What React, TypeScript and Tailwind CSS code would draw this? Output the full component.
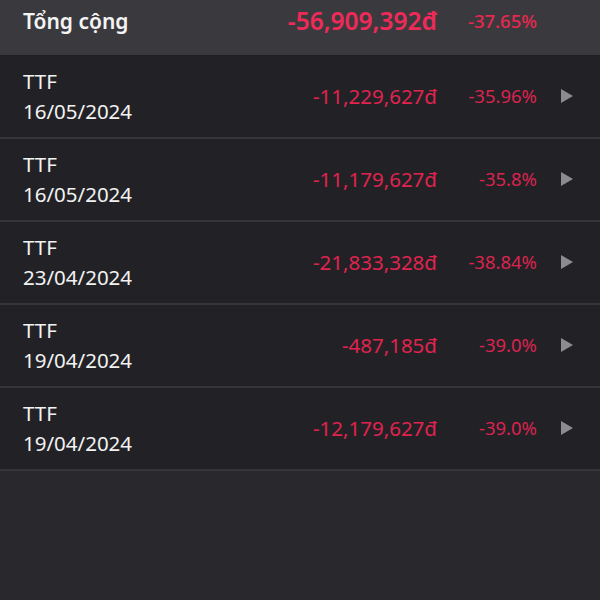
import React from "react";

const rows = [
  { code: "TTF", date: "16/05/2024", value: "-11,229,627đ", pct: "-35.96%" },
  { code: "TTF", date: "16/05/2024", value: "-11,179,627đ", pct: "-35.8%" },
  { code: "TTF", date: "23/04/2024", value: "-21,833,328đ", pct: "-38.84%" },
  { code: "TTF", date: "19/04/2024", value: "-487,185đ", pct: "-39.0%" },
  { code: "TTF", date: "19/04/2024", value: "-12,179,627đ", pct: "-39.0%" },
];

export default function App() {
  return (
    <div
      className="w-[600px] h-[600px] bg-[#28282d] flex flex-col overflow-hidden"
      style={{ fontFamily: '"Noto Sans", "Open Sans", sans-serif' }}
    >
      <div className="h-[56px] shrink-0 bg-[#3a3a3e] flex items-start pt-[6px] pl-[23px] pr-[27px] border-b border-[#1f1f22]">
        <div className="flex-1 text-[21px] leading-[30px] font-semibold text-[#f4f4f4]">Tổng cộng</div>
        <div className="flex items-center h-[30px]">
          <div className="text-[24.5px] font-semibold text-[#ef2a59]">-56,909,392đ</div>
          <div className="w-[73px] ml-[27px] text-right text-[18.5px] font-medium text-[#e8274f]">-37.65%</div>
          <div className="w-[12px] ml-[24px]" />
        </div>
      </div>
      {rows.map((r, i) => (
        <div
          key={i}
          className="flex items-center bg-[#222226] pl-[23px] pr-[27px] pt-[10px] pb-[11px] border-b-2 border-[#35353a]"
        >
          <div className="flex-1 text-[20.5px] leading-[30px] text-[#f2f2f2]">
            <div>{r.code}</div>
            <div>{r.date}</div>
          </div>
          <div className="text-[20.5px] text-[#e0234f]">{r.value}</div>
          <div className="w-[73px] ml-[27px] text-right text-[18.5px] text-[#db2350]">{r.pct}</div>
          <svg className="ml-[24px]" width="12" height="14" viewBox="0 0 12 14">
            <path d="M0 0 L12 7 L0 14 Z" fill="#8c8c8f" />
          </svg>
        </div>
      ))}
    </div>
  );
}
